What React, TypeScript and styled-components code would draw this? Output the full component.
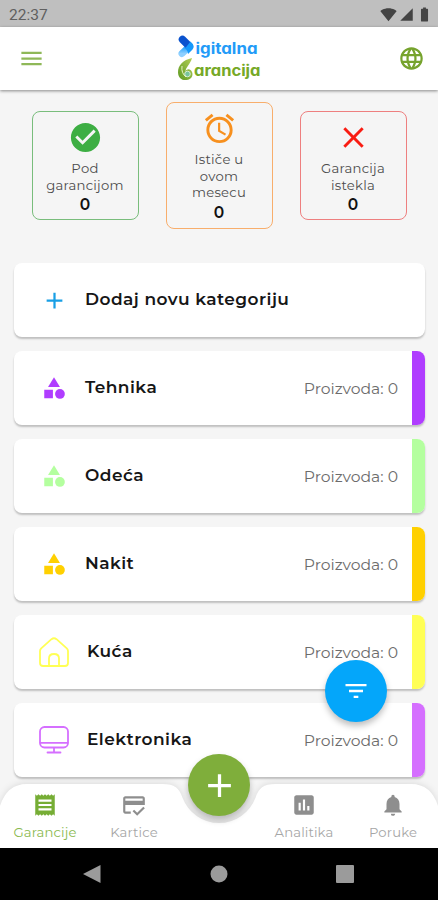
import React from "react";
import styled, { createGlobalStyle } from "styled-components";
import {
  MdAdd,
  MdAlarm,
  MdBatteryFull,
  MdCategory,
  MdCheckCircle,
  MdClose,
  MdCreditScore,
  MdFilterList,
  MdInsertChart,
  MdLanguage,
  MdMenu,
  MdNotifications,
  MdReceipt,
  MdSignalCellular4Bar,
  MdSignalWifi4Bar,
} from "react-icons/md";

const GlobalStyle = createGlobalStyle`
  * { box-sizing: border-box; }
  body { margin: 0; background: #f5f5f5; font-family: Montserrat, Inter, sans-serif; }
  svg { display: block; flex: none; }
`;

const Screen = styled.div`
  position: relative;
  width: 438px;
  height: 900px;
  display: flex;
  flex-direction: column;
  overflow: hidden;
  background: #f5f5f5;
`;

const StatusBar = styled.div`
  flex: none;
  height: 27px;
  padding: 2px 5px 0 9px;
  display: flex;
  align-items: center;
  background: #bfbfbf;
  color: #444;
  font: 400 15.5px Roboto, sans-serif;
`;

const Clock = styled.span`
  flex: 1;
  color: #606060;
`;

const StatusIcons = styled.div`
  display: flex;
  align-items: center;
  gap: 2px;
`;

const Header = styled.header`
  flex: none;
  height: 63px;
  padding: 0 13px 1px 18px;
  display: flex;
  align-items: center;
  justify-content: space-between;
  background: #fff;
  color: #76a32d;
  box-shadow: 0 1px 3px rgba(0, 0, 0, 0.45);
`;

const MenuIcon = styled(MdMenu)`
  color: #8fb858;
`;

const Stats = styled.section`
  flex: none;
  height: 151px;
  display: flex;
  align-items: center;
  justify-content: center;
  gap: 27px;
`;

const StatCard = styled.div<{ $color: string; $tall?: boolean }>`
  width: 107px;
  height: ${(p) => (p.$tall ? 127 : 109)}px;
  padding-top: 8px;
  display: flex;
  flex-direction: column;
  align-items: center;
  border: 1px solid ${(p) => p.$color};
  border-radius: 8px;
`;

const StatLabel = styled.div`
  margin-top: 5px;
  color: #4c4c4c;
  font-size: 13.2px;
  line-height: 16.5px;
  text-align: center;
  white-space: pre-line;
  letter-spacing: 0.25px;
`;

const StatValue = styled.div`
  margin-top: 2px;
  color: #111;
  font-size: 15.5px;
  font-weight: 600;
  line-height: 20px;
`;

const List = styled.main`
  flex: 1;
  padding: 22px 13px 0 14px;
  display: flex;
  flex-direction: column;
  gap: 14px;
`;

const Row = styled.div`
  flex: none;
  height: 74px;
  display: flex;
  align-items: center;
  border-radius: 8px;
  overflow: hidden;
  background: #fff;
  box-shadow: 0 2px 2px rgba(0, 0, 0, 0.22);
`;

const RowIcon = styled.div<{ $color: string }>`
  width: 80px;
  flex: none;
  display: flex;
  justify-content: center;
  color: ${(p) => p.$color};
`;

const RowTitle = styled.div<{ $outlined?: boolean }>`
  flex: 1;
  margin: -2px 0 0 ${(p) => (p.$outlined ? -7 : -9)}px;
  color: #161616;
  font-size: 17px;
  font-weight: 600;
  letter-spacing: 0.45px;
`;

const RowCount = styled.div`
  margin-right: 14px;
  color: #6c6c6c;
  font-size: 15.6px;
  font-weight: 400;
`;

const Strip = styled.div<{ $color: string }>`
  align-self: stretch;
  width: 13px;
  background: ${(p) => p.$color};
`;

const TabBar = styled.nav`
  position: relative;
  flex: none;
  height: 64px;
`;

const TabShape = styled.svg`
  position: absolute;
  inset: 0;
  filter: drop-shadow(0 -1px 3px rgba(0, 0, 0, 0.1));
`;

const Tabs = styled.div`
  position: relative;
  height: 100%;
  display: grid;
  grid-template-columns: 90px 88px 82px 88px 90px;
`;

const Tab = styled.div<{ $active?: boolean }>`
  padding-top: 8px;
  display: flex;
  flex-direction: column;
  align-items: center;
  gap: 6px;
  color: ${(p) => (p.$active ? "#76ad35" : "#8e8e8e")};
`;

const TabLabel = styled.span<{ $active?: boolean }>`
  color: ${(p) => (p.$active ? "#8ab94f" : "#a6a6a6")};
  font-size: 13.2px;
  line-height: 16px;
  letter-spacing: 0.15px;
`;

const RoundButton = styled.button<{ $color: string; $x: number; $y: number }>`
  position: absolute;
  left: ${(p) => p.$x}px;
  top: ${(p) => p.$y}px;
  width: 62px;
  height: 62px;
  padding: 0;
  display: grid;
  place-items: center;
  border: 0;
  border-radius: 50%;
  color: #fff;
  background: ${(p) => p.$color};
  box-shadow: 0 4px 6px rgba(0, 0, 0, 0.25);
`;

const SystemNav = styled.div`
  flex: none;
  height: 52px;
  padding: 0 84px 0 83px;
  display: flex;
  align-items: center;
  justify-content: space-between;
  background: #000;
`;

const LogoText = styled.text`
  font-family: Inter, sans-serif;
  font-size: 15.5px;
  font-weight: 700;
  font-feature-settings: "cv11";
`;

const Logo = () => (
  <svg width="92" height="50" viewBox="0 0 92 50">
    <defs>
      <linearGradient id="blue" x1="0" y1="0" x2="0" y2="1">
        <stop offset="0" stopColor="#169cfb" />
        <stop offset="1" stopColor="#8fd0ff" />
      </linearGradient>
      <linearGradient id="leaf" x1="1" y1="0" x2="0" y2="1">
        <stop offset="0" stopColor="#b5ce58" />
        <stop offset="1" stopColor="#5d9a22" />
      </linearGradient>
    </defs>
    <path d="M13.500 13.500 6 20.500" stroke="url(#blue)" strokeWidth="7" strokeLinecap="round" />
    <path d="M6.500 6.500 11 11" stroke="#0a52ce" strokeWidth="7.500" strokeLinecap="round" />
    <path d="M9 15.500 14.500 8.500Q19.500 13 16.500 16.500L12 21Q12 17.500 9 15.500Z" fill="#1598fb" />
    <path d="M16 25C7 27 2 32 2 39.500C2.500 45.500 6 47.500 10.500 47C15.500 46.500 17.500 42.500 16 39C14.500 35.500 11 35.500 9.500 38.500C10 33.500 14 32 16 25Z" fill="url(#leaf)" />
    <path d="M6 33Q5 40 10 44" stroke="#e8f4c8" strokeWidth="1" fill="none" />
    <circle cx="11.500" cy="41" r="2.800" fill="#77c49a" stroke="#e9f7e9" strokeWidth="0.8" />
    <LogoText x="19.500" y="21" fill="#229bf8" textLength="62" lengthAdjust="spacingAndGlyphs">igitalna</LogoText>
    <LogoText x="18" y="43" fill="#76a927" textLength="66.500" lengthAdjust="spacingAndGlyphs">arancija</LogoText>
  </svg>
);

const HouseIcon = () => (
  <svg width="32" height="32" viewBox="0 0 32 32" fill="none" stroke="currentColor" strokeWidth="1.8" strokeLinejoin="round">
    <path d="M2 15Q2 13.500 3.200 12.300L13.500 3.200Q16 1.200 18.500 3.200L28.800 12.300Q30 13.500 30 15V27Q30 30 27 30H5Q2 30 2 27Z" />
    <path d="M11 29.500V22.500Q11 18 16 18T21 22.500V29.500" />
  </svg>
);

const MonitorIcon = () => (
  <svg width="32" height="32" viewBox="0 0 32 32" fill="none" stroke="currentColor" strokeWidth="1.800" strokeLinecap="round">
    <rect x="2" y="3" width="28" height="20.500" rx="4.500" />
    <path d="M2.500 18.800H29.500M16 24V28M9.500 28.500H22.500" />
  </svg>
);

const categories = [
  { title: "Tehnika", color: "#b03dff", icon: <MdCategory size={26} /> },
  { title: "Odeća", color: "#b4ff9f", icon: <MdCategory size={26} /> },
  { title: "Nakit", color: "#ffd000", icon: <MdCategory size={26} /> },
  { title: "Kuća", color: "#ffff55", icon: <HouseIcon />, outlined: true },
  { title: "Elektronika", color: "#d56fff", icon: <MonitorIcon />, outlined: true },
];

export default function App() {
  return (
    <Screen>
      <GlobalStyle />
      <StatusBar>
        <Clock>22:37</Clock>
        <StatusIcons>
          <MdSignalWifi4Bar size={17} />
          <MdSignalCellular4Bar size={15} />
          <MdBatteryFull size={17} />
        </StatusIcons>
      </StatusBar>
      <Header>
        <MenuIcon size={27} />
        <Logo />
        <MdLanguage size={27} />
      </Header>
      <Stats>
        <StatCard $color="#79bd7c">
          <MdCheckCircle size={35} color="#3dae43" />
          <StatLabel>{"Pod\ngarancijom"}</StatLabel>
          <StatValue>0</StatValue>
        </StatCard>
        <StatCard $color="#f8ae6c" $tall>
          <MdAlarm size={35} color="#f7901e" />
          <StatLabel>{"Ističe u\novom\nmesecu"}</StatLabel>
          <StatValue>0</StatValue>
        </StatCard>
        <StatCard $color="#ee7f7f">
          <MdClose size={35} color="#f91c12" />
          <StatLabel>{"Garancija\nistekla"}</StatLabel>
          <StatValue>0</StatValue>
        </StatCard>
      </Stats>
      <List>
        <Row>
          <RowIcon $color="#189fe5">
            <MdAdd size={27} />
          </RowIcon>
          <RowTitle>Dodaj novu kategoriju</RowTitle>
        </Row>
        {categories.map((c) => (
          <Row key={c.title}>
            <RowIcon $color={c.color}>{c.icon}</RowIcon>
            <RowTitle $outlined={c.outlined}>{c.title}</RowTitle>
            <RowCount>Proizvoda: 0</RowCount>
            <Strip $color={c.color} />
          </Row>
        ))}
      </List>
      <TabBar>
        <TabShape width="438" height="64" viewBox="0 0 438 64">
          <path
            d="M0 22Q7 0 27 0H162C175 0 179 4 182.600 14A39 39 0 0 0 255.400 14C259 4 263 0 276 0H411Q431 0 438 22V64H0Z"
            fill="#fff"
          />
        </TabShape>
        <Tabs>
          <Tab $active>
            <MdReceipt size={26} />
            <TabLabel $active>Garancije</TabLabel>
          </Tab>
          <Tab>
            <MdCreditScore size={26} />
            <TabLabel>Kartice</TabLabel>
          </Tab>
          <span />
          <Tab>
            <MdInsertChart size={26} />
            <TabLabel>Analitika</TabLabel>
          </Tab>
          <Tab>
            <MdNotifications size={26} />
            <TabLabel>Poruke</TabLabel>
          </Tab>
        </Tabs>
      </TabBar>
      <SystemNav>
        <svg width="18" height="18">
          <path d="M17.500 0V18L0 9Z" fill="#9b9b9b" />
        </svg>
        <svg width="18" height="18">
          <circle cx="9" cy="9" r="8.500" fill="#9b9b9b" />
        </svg>
        <svg width="18" height="18">
          <rect width="18" height="18" rx="1" fill="#9b9b9b" />
        </svg>
      </SystemNav>
      <RoundButton $color="#04a6fa" $x={325} $y={660} aria-label="Filter">
        <MdFilterList size={28} />
      </RoundButton>
      <RoundButton $color="#7fae3b" $x={188} $y={754} aria-label="Dodaj">
        <MdAdd size={39} />
      </RoundButton>
    </Screen>
  );
}
